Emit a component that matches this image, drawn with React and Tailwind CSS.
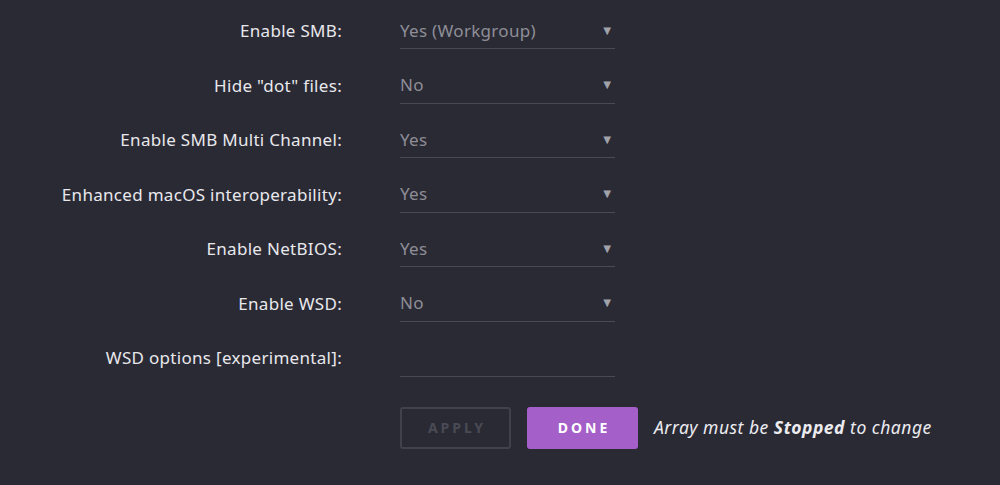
import { useState } from "react";

const rows = [
  { label: "Enable SMB:", value: "Yes (Workgroup)" },
  { label: 'Hide "dot" files:', value: "No" },
  { label: "Enable SMB Multi Channel:", value: "Yes" },
  { label: "Enhanced macOS interoperability:", value: "Yes" },
  { label: "Enable NetBIOS:", value: "Yes" },
  { label: "Enable WSD:", value: "No" },
];

function SelectField({ value }) {
  return (
    <div className="flex h-[38px] w-[215px] items-center justify-between border-b border-[#4a4a55] pr-[1px] pt-[2px] text-[17px] text-[#8e8e96]">
      <span>{value}</span>
      <span className="text-[13px] text-[#a2a2aa]">▼</span>
    </div>
  );
}

export default function App() {
  const [wsd, setWsd] = useState("");

  return (
    <div
      className="min-h-[485px] w-full bg-[#2a2a35] pt-[11px] text-[17px] tracking-[0.3px]"
      style={{ fontFamily: '"Noto Sans", "Open Sans", sans-serif' }}
    >
      {rows.map((row) => (
        <div key={row.label} className="flex h-[54.5px] items-start">
          <div className="flex h-[38px] w-[342px] items-center justify-end pt-[2px] text-[#e8e8ec]">
            {row.label}
          </div>
          <div className="ml-[58px]">
            <SelectField value={row.value} />
          </div>
        </div>
      ))}

      <div className="flex h-[54.5px] items-start">
        <div className="flex h-[38px] w-[342px] items-center justify-end pt-[2px] text-[#e8e8ec]">
          WSD options [experimental]:
        </div>
        <input
          value={wsd}
          onChange={(e) => setWsd(e.target.value)}
          className="ml-[58px] h-[39px] w-[215px] border-b border-[#4a4a55] bg-transparent text-[#8e8e96] outline-none"
        />
      </div>

      <div className="mt-[14px] flex items-center">
        <button
          type="button"
          className="ml-[400px] h-[42px] w-[111px] rounded-[3px] border-2 border-[#41414c] pl-[3px] text-[14px] font-bold tracking-[3px] text-[#4a4a55]"
        >
          APPLY
        </button>
        <button
          type="button"
          className="ml-[16px] h-[42px] w-[111px] rounded-[3px] bg-[#a55fc8] pl-[3px] text-[14px] font-bold tracking-[3px] text-white"
        >
          DONE
        </button>
        <span className="ml-[16px] text-[17.5px] italic tracking-[0.5px] text-[#ececf0]">
          Array must be <b>Stopped</b> to change
        </span>
      </div>
    </div>
  );
}
